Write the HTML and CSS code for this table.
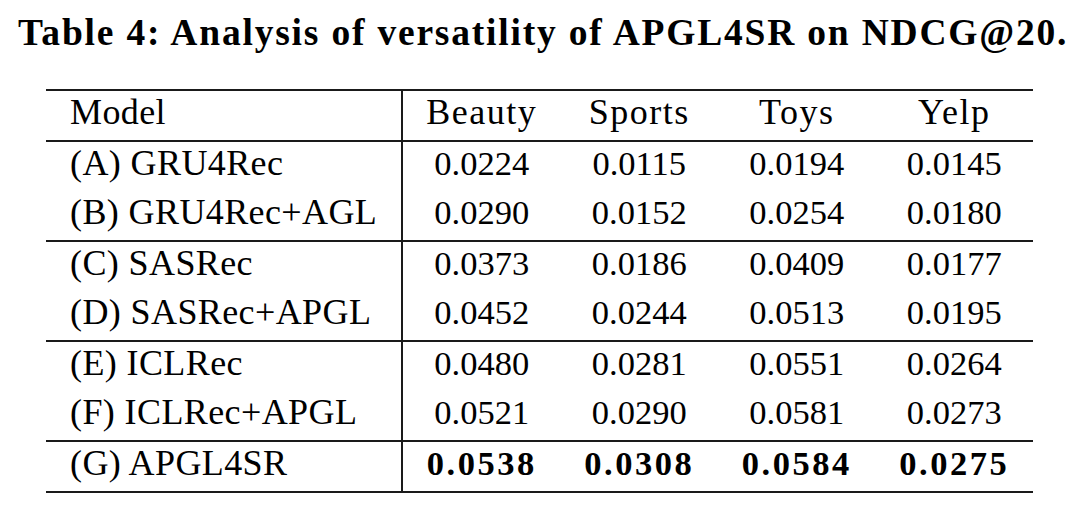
FILE: index.html
```html
<!DOCTYPE html>
<html lang="en">
<head>
<meta charset="utf-8">
<title>Table 4</title>
<link rel="stylesheet" href="styles.css">
</head>
<body>
<div class="page">
  <p class="caption">Table 4: Analysis of versatility of APGL4SR on NDCG@20.</p>
  <table class="results">
    <thead>
      <tr class="head">
        <th class="model">Model</th>
        <th class="ds">Beauty</th>
        <th class="ds">Sports</th>
        <th class="ds">Toys</th>
        <th class="ds">Yelp</th>
      </tr>
    </thead>
    <tbody>
      <tr>
        <td class="model">(A) GRU4Rec</td>
        <td class="num">0.0224</td><td class="num">0.0115</td><td class="num">0.0194</td><td class="num">0.0145</td>
      </tr>
      <tr class="group-end">
        <td class="model">(B) GRU4Rec+AGL</td>
        <td class="num">0.0290</td><td class="num">0.0152</td><td class="num">0.0254</td><td class="num">0.0180</td>
      </tr>
      <tr>
        <td class="model">(C) SASRec</td>
        <td class="num">0.0373</td><td class="num">0.0186</td><td class="num">0.0409</td><td class="num">0.0177</td>
      </tr>
      <tr class="group-end">
        <td class="model">(D) SASRec+APGL</td>
        <td class="num">0.0452</td><td class="num">0.0244</td><td class="num">0.0513</td><td class="num">0.0195</td>
      </tr>
      <tr>
        <td class="model">(E) ICLRec</td>
        <td class="num">0.0480</td><td class="num">0.0281</td><td class="num">0.0551</td><td class="num">0.0264</td>
      </tr>
      <tr class="group-end">
        <td class="model">(F) ICLRec+APGL</td>
        <td class="num">0.0521</td><td class="num">0.0290</td><td class="num">0.0581</td><td class="num">0.0273</td>
      </tr>
      <tr class="group-end">
        <td class="model">(G) APGL4SR</td>
        <td class="num best">0.0538</td><td class="num best">0.0308</td><td class="num best">0.0584</td><td class="num best">0.0275</td>
      </tr>
    </tbody>
  </table>
</div>
</body>
</html>
```

FILE: styles.css
```css
html, body {
  margin: 0;
  padding: 0;
  background: #ffffff;
  color: #000000;
  font-family: "Liberation Serif", "Times New Roman", serif;
}

.page {
  padding: 13px 0 0 0;
}

.caption {
  margin: 0 0 36px 0;
  padding-left: 18px;
  font-size: 37.5px;
  line-height: 40px;
  font-weight: bold;
  letter-spacing: 1.8px;
  white-space: nowrap;
}

.results {
  margin-left: 46px;
  width: 987px;
  table-layout: fixed;
  border-collapse: separate;
  border-spacing: 0;
  border-top: 2px solid #1a1a1a;
}

.results th,
.results td {
  height: 43px;
  padding: 0 0 6px 0;
  line-height: 43px;
  vertical-align: top;
  text-align: center;
  font-weight: normal;
  white-space: nowrap;
}

.results .model {
  width: 331px;
  padding-left: 24px;
  text-align: left;
  font-size: 36px;
  letter-spacing: 0.4px;
  border-right: 2px solid #1a1a1a;
}

.results .ds {
  font-size: 36px;
  letter-spacing: 1.5px;
}

.results .num {
  font-size: 34.5px;
}

.results .best {
  font-weight: bold;
  letter-spacing: 2.5px;
}

.head th,
.group-end td {
  border-bottom: 2px solid #1a1a1a;
}
```
